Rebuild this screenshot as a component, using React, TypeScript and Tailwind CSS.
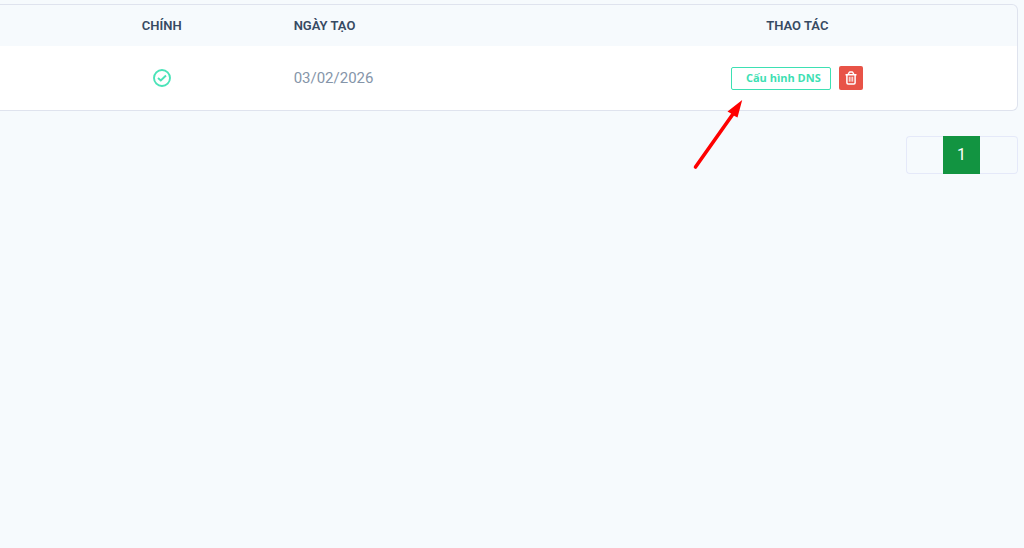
import React from 'react'

interface Domain {
  id: number
  isPrimary: boolean
  createdAt: string
}

const domains: Domain[] = [{ id: 1, isPrimary: true, createdAt: '03/02/2026' }]

export default function App() {
  return (
    <main className="min-h-screen bg-[#f6fafd] pt-1 pr-1.5 font-['Roboto',sans-serif]">
      <DomainTable domains={domains} />
      <Pagination current={1} />
    </main>
  )
}

function DomainTable({ domains }: { domains: Domain[] }) {
  return (
    <div className="rounded-r-md border-y border-r border-[#dfe3ee]">
      <table className="w-full table-fixed">
        <colgroup>
          <col className="w-[4.5%]" />
          <col className="w-[22.8%]" />
          <col className="w-[29.5%]" />
          <col />
        </colgroup>
        <thead>
          <tr className="h-[41px] text-[13px] leading-5 font-semibold text-[#364a63]">
            <td />
            <th scope="col" className="text-center font-semibold">CHÍNH</th>
            <th scope="col" className="px-4 text-left font-semibold">NGÀY TẠO</th>
            <th scope="col" className="text-center font-semibold">THAO TÁC</th>
          </tr>
        </thead>
        <tbody>
          {domains.map((domain) => (
            <DomainRow key={domain.id} domain={domain} />
          ))}
        </tbody>
      </table>
    </div>
  )
}

function DomainRow({ domain }: { domain: Domain }) {
  return (
    <tr className="h-16">
      <td className="bg-white" />
      <td className="bg-white">{domain.isPrimary && <CheckIcon />}</td>
      <td className="bg-white px-4 text-[15px] leading-6 text-[#8595a9]">{domain.createdAt}</td>
      <td className="rounded-br-md bg-white">
        <div className="flex items-center justify-center gap-2">
          <div className="relative">
            <button
              type="button"
              className="block h-[23px] w-[100px] rounded-xs border border-[#3de0b3] pl-1 font-['Open_Sans',sans-serif] text-[11px] leading-5 font-bold whitespace-nowrap text-[#3de0b3]"
            >
              Cấu hình DNS
            </button>
            <PointerArrow />
          </div>
          <button
            type="button"
            aria-label="Xóa"
            className="flex size-6 items-center justify-center rounded-xs bg-[#e85347] text-white"
          >
            <TrashIcon />
          </button>
        </div>
      </td>
    </tr>
  )
}

function Pagination({ current }: { current: number }) {
  return (
    <nav aria-label="Phân trang" className="mt-[25px] flex justify-end">
      <button type="button" aria-label="Trang trước" className="h-[38px] w-[37px] rounded-l-sm border border-r-0 border-[#e5e9f9]" />
      <button
        type="button"
        aria-current="page"
        className="h-[38px] w-[37px] bg-[#129441] text-base text-white"
      >
        {current}
      </button>
      <button type="button" aria-label="Trang sau" className="h-[38px] w-[38px] rounded-r-sm border border-l-0 border-[#e5e9f9]" />
    </nav>
  )
}

function CheckIcon() {
  return (
    <svg viewBox="0 0 18 18" className="mx-auto size-[18px]" fill="none" stroke="#4ae3b8" aria-hidden="true">
      <circle cx="9" cy="9" r="8" strokeWidth="1.9" />
      <path d="M5 9l2.8 2.5 5.2-5" strokeWidth="1.9" />
    </svg>
  )
}

function TrashIcon() {
  return (
    <svg viewBox="0 0 12 14" className="h-3.5 w-3" fill="none" stroke="currentColor" aria-hidden="true">
      <path d="M.5 3.7h11M3.2 3.4l.8-1.7c.2-.4.5-.7 1-.7h2c.5 0 .8.3 1 .7l.8 1.7" strokeWidth="1.4" />
      <path d="M1.9 3.7v8c0 .7.5 1.2 1.2 1.2h5.8c.7 0 1.2-.5 1.2-1.2v-8" strokeWidth="1.5" />
      <path d="M4.3 5.7v5M7.7 5.7v5M6 5.7v5" strokeWidth=".9" />
    </svg>
  )
}

function PointerArrow() {
  return (
    <svg
      viewBox="0 0 54 72"
      className="pointer-events-none absolute top-8 -left-10 h-[72px] w-[54px]"
      aria-hidden="true"
    >
      <path d="M4.5 68L42 15" stroke="#fe0000" strokeWidth="3.6" strokeLinecap="round" />
      <path d="M51.2 1L36.5 12.5 40 14.5 43.5 17 46.5 18.5z" fill="#fe0000" />
    </svg>
  )
}
